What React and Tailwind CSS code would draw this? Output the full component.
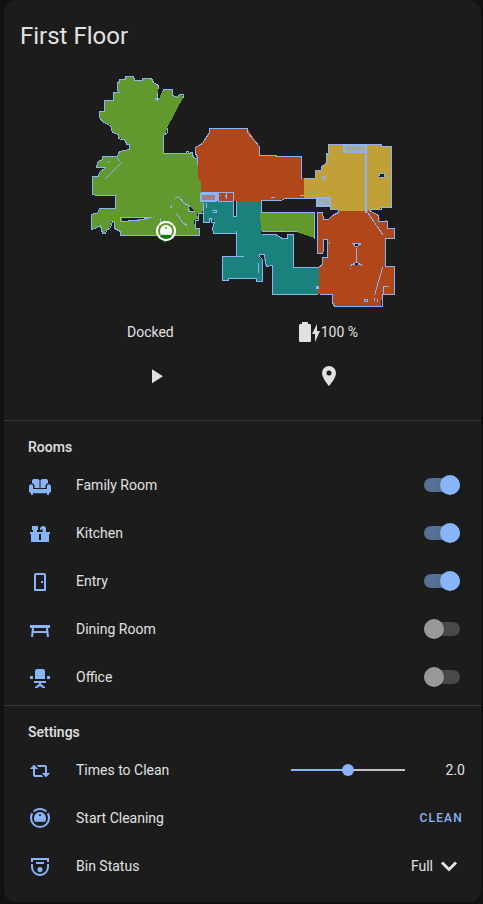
import { useState } from "react";

const ROBOT =
  "M12,2C14.65,2 17.19,3.06 19.07,4.93L17.65,6.35C16.15,4.85 14.12,4 12,4C9.88,4 7.84,4.84 6.35,6.35L4.93,4.93C6.81,3.06 9.35,2 12,2M3.66,6.5L5.11,7.94C4.39,9.17 4,10.57 4,12A8,8 0 0,0 12,20A8,8 0 0,0 20,12C20,10.57 19.61,9.17 18.88,7.94L20.34,6.5C21.42,8.12 22,10.04 22,12A10,10 0 0,1 12,22A10,10 0 0,1 2,12C2,10.04 2.58,8.12 3.66,6.5M12,6A6,6 0 0,1 18,12C18,13.59 17.6,15.2 16.9,16.2L15.8,15.2L14.6,16.2L13.3,15.4L12,16.2L10.7,15.4L9.4,16.2L8.2,15.2L7.1,16.2C6.4,15.2 6,13.59 6,12A6,6 0 0,1 12,6M12,8A1,1 0 0,0 11,9A1,1 0 0,0 12,10A1,1 0 0,0 13,9A1,1 0 0,0 12,8Z";

const ICONS = {
  sofa: "M6,6H9.6Q11,6 11,7.4V15H6.5V13Q6.5,10.4 4,10.2V8Q4,6 6,6ZM14.4,6H18Q20,6 20,8V10.2Q17.5,10.4 17.5,13V15H13V7.4Q13,6 14.4,6ZM3.2,11.2Q5.2,11.2 5.2,13.4V16H18.8V13.4Q18.8,11.2 20.8,11.2T23,13.4V18Q23,20 21,20.2V22H19V20.2H5V22H3V20.2Q1,20 1,18V13.4Q1,11.2 3.2,11.2Z",
  counter:
    "M4,5H10V9H9V11H14.5V8H13.5V9H12V7.5Q12.3,5 15,5Q18,5 18,8V11H22V13H21V21H3V13H2V11H5V9H4ZM11,13V19H13V13Z",
  door: "M8,4H16Q18,4 18,6V22H6V6Q6,4 8,4ZM8,6V20H16V6ZM13,12H15V14H13Z",
  table: "M2,8H22V11H20L21,20H19L18.4,16H5.6L5,20H3L4,11H2ZM6,11L5.8,14H18.2L18,11Z",
  chair:
    "M9,4H15Q17,4 17,6V14H7V6Q7,4 9,4ZM2,11H5V14H2ZM19,11H22V14H19ZM6,16H18V18H13V19L17,22V23H15L12,21.2L9,23H7V22L11,19V18H6Z",
  repeat:
    "M6,6.75L10.25,11H7V17H13.5L15.5,19H7A2,2 0 0,1 5,17V11H1.75L6,6.75M18,19.25L13.75,15H17V9H10.5L8.5,7H17A2,2 0 0,1 19,9V15H22.25L18,19.25Z",
  robot: ROBOT,
  bin: "M3,4H21V8H19V6H5V8H3ZM3,10H5V13A7,7 0 0,0 19,13V10H21V13A9,9 0 0,1 3,13ZM8,8H16V10H8ZM12,13A2.6,2.6 0 1,1 11.99,13Z",
  play: "M8,5.14V19.14L19,12.14L8,5.14Z",
  marker:
    "M12,11.5A2.5,2.5 0 0,1 9.5,9A2.5,2.5 0 0,1 12,6.5A2.5,2.5 0 0,1 14.5,9A2.5,2.5 0 0,1 12,11.5M12,2A7,7 0 0,0 5,9C5,14.25 12,22 12,22C12,22 19,14.25 19,9A7,7 0 0,0 12,2Z",
  battery:
    "M23,11H20V4L15,14H18V22M12.67,4H11V2H5V4H3.33A1.33,1.33 0 0,0 2,5.33V20.67C2,21.4 2.6,22 3.33,22H12.67C13.4,22 14,21.4 14,20.67V5.33A1.33,1.33 0 0,0 12.67,4Z",
};

function Icon({ name, className = "text-[#8ab4f8]" }) {
  return (
    <svg viewBox="0 0 24 24" className={`size-6 shrink-0 ${className}`} fill="currentColor" fillRule="evenodd" aria-hidden="true">
      {name === "sofa" && <path d="M11,7H13V15H11Z" opacity="0.5" />}
      <path d={ICONS[name]} />
    </svg>
  );
}

function FloorMap() {
  return (
    <svg viewBox="83 68 319 244" className="mx-auto mt-2 block w-[319px]" shapeRendering="crispEdges" role="img" aria-label="Floor map">
      {/* room fills */}
      <path fill="#62992e" d="M118,82L119,80L123,79L125,77H133L134,80H142V79H151L153,82L156,84L158,86V101L162,92L163,90H172L173,96H177L180,95L184,96L167,128L166,133L163,135V153H193L194,157L198,160V177L201,182V192L204,206L202,213H197L198,219L194,220L195,228H200V235H121L120,231L114,228V221H112L110,227L106,230L105,233H102L100,226L97,228L92,229V214L98,212L99,208H115V195H97L93,194V177L98,176L99,172L105,168H96L97,162L102,159V156H117L119,151L129,149V144H126L125,140L119,138L118,134L112,133L111,125L103,122L99,117V112H104V101H113L114,93H118Z" />
      <path fill="#b0471b" d="M209,128H247L259,146V155H277V156H301V178H304V198H285L280,200H261V203H233V201H201V182L198,177V165L197,157L195,153V147L202,143L209,132Z" />
      <path fill="#1a817d" d="M203,202H261V234H275L282,238H287L288,234H293V267H319V285L317,294H272V265L265,266L264,255H259L260,259H262V281H257L256,278H229V280H222V256H237L236,233H213L212,228L214,221L203,222Z" />
      <path fill="#62992e" d="M260,212H314V238L308,236L302,234L296,232V231H261Z" />
      <path fill="#c2a038" d="M328,144H381V146H391V207H381L380,209L370,210L365,212H339L338,209H331V206H316V198H304V178H315V170H321L322,166L326,163V153H328Z" />
      <path fill="#b0471b" d="M317,212H322L323,219H328L332,215L339,213V211H366L370,210L375,214L380,218L379,222L387,220V228H394V238H385V266H394V294H382L381,307L334,306L332,302V294H317L319,285V268L318,267L322,264L323,257H328V239H324L323,253H317Z" />
      {/* gaps in the plan */}
      <path fill="#1c1c1c" d="M122,218H146V219H137V220H128V221H122ZM234,201H236V216H234ZM189,207H191L194,211H190ZM379,174H384V177H379ZM325,241H327V248H325Z" />
      {/* walls */}
      <g fill="none" stroke="#8ab4f8" strokeWidth="1" transform="translate(.5 .5)">
        <path d="M157,92V100M158,88V85L156,84L153,82L151,78H142V80H134L133,76H125V79H119V82H117V90L119,92H113V100H104V111H99V117L103,122L110,125L112,132L118,134V138L125,140L126,144H129V149L119,151L117,156H102V159L97,162L96,167H105L99,172L98,176H92V194L97,195H115V208H99L98,212L91,214V229L97,227L100,225L102,233H105L106,230L110,227L112,221H114V228L120,231V235H199V228H195V220H198V213H202M162,92L163,89H172V95L177,97L179,94H183V97M167,127V132L163,135V153H186V151H188V153L192,152V156L197,159V164" />
        <path d="M104,179L121,162M117,158L120,161M108,160V162M120,217H151L137,220H128V221H120ZM160,217V223M175,198L178,196L184,203L190,206M194,211H188V206M176,213L180,219L183,223L187,225M171,204V207H169" />
        <path d="M206,202V207M203,202V222H209V218H211V222H214L212,228L213,233H236V230M236,233V256H243M236,256H222V280H228V278H256V281H262V259L259,256V254H264L266,266L272,265V294H317M258,262V272M211,210H216V212H212" />
        <path d="M197,164V157L195,153V147L202,143L209,132V128H247V132L259,146V155H276V156H301V178M204,201L201,193M261,212V200H280L285,198H304M270,197H274M299,195H303M309,195H312M200,192H233V201H217M236,200V216H233V202" />
        <path d="M261,212H314V238M261,231H296M261,234H275L282,238H287V234H293V267H318L322,264V257H327V239H323V251M281,229V230" />
        <path d="M304,178H315V170H321V166L326,163V153H328V144H381V146H391V207H381V209H370M303,198H316M330,206V209H338V212L332,215L328,219H323L322,212H317V253H322V251M322,176H324V179H322ZM378,175H379V173H384V177H378M387,177H388M376,147H377" />
        <path d="M367,212L383,235M369,210L378,215V221H387V228H394V238H385V266H394V294H382V306H334L332,302V294H319M382,267L374,295M383,294V286H388M352,243L356,246L361,243M356,247V260M350,265L356,262L362,265M364,299H367V301H364ZM374,297V300M377,298V301M350,267V268M329,241V243" />
      </g>
      <path stroke="#8ab4f8" strokeWidth="2" d="M366,144V213" />
      <g stroke="#8ab4f8" strokeWidth="2">
        <path fill="#a37d87" d="M201,194H216V201H201Z" />
        <path fill="#a5a89d" d="M344,145H366V152H344ZM317,198H330V206H317Z" />
      </g>
      <path fill="#8ab4f8" d="M217,193H219V201H217ZM220,195H221V196H220ZM225,195H227V197H225ZM226,193H227V199H226ZM155,98H159V100H155ZM320,203L322,200L324,204H319ZM316,286H319V289H316ZM352,243H361L358,247H355ZM353,265L356,261L360,265Z" />
      <path fill="#1c1c1c" d="M355,244H358V246H355ZM355,263H358V265H355Z" />
      {/* dock and robot */}
      <path fill="#0a7d08" d="M160,233H172L168,240L165,244L163,240Z" />
      <g shapeRendering="auto" transform="translate(154 219)">
        <path fill="#0a7d08" d="M7,12H17V18H7Z" />
        <path fill="#ffffff" fillRule="evenodd" d={ROBOT} />
        <circle cx="12" cy="12" r="9.2" fill="none" stroke="#fff" strokeWidth="1.4" />
      </g>
    </svg>
  );
}

function Section({ title, children }) {
  return (
    <section className="border-t border-[#383838] px-4 pt-4">
      <h2 className="px-2 text-sm leading-5 font-medium">{title}</h2>
      <div className="my-2 flex flex-col gap-2">{children}</div>
    </section>
  );
}

function Row({ icon, label, id, children }) {
  return (
    <div className="flex h-10 items-center pl-2">
      <Icon name={icon} />
      <label htmlFor={id} className="ml-6 flex-1">{label}</label>
      {children}
    </div>
  );
}

function Room({ icon, label, on = false }) {
  const [checked, setChecked] = useState(on);
  const id = label.replace(" ", "-").toLowerCase();
  return (
    <Row icon={icon} label={label} id={id}>
      <input
        id={id}
        type="checkbox"
        role="switch"
        checked={checked}
        onChange={() => setChecked(!checked)}
        className="mr-[5px] flex h-3.5 w-9 appearance-none items-center rounded-full bg-[#494949] before:size-5 before:shrink-0 before:rounded-full before:bg-[#999999] before:shadow-md checked:justify-end checked:bg-[#586f96] checked:before:bg-[#8ab4f8]"
      />
    </Row>
  );
}

export default function App() {
  const [times, setTimes] = useState(2);
  const fill = `${(times - 1) * 50}%`;
  return (
    <div className="min-h-screen bg-[#111111] pr-0.5 pl-1 font-[Roboto,sans-serif] text-sm text-[#e1e1e1]">
      <main className="rounded-xl bg-[#1c1c1c] pt-3 pb-2">
        <h1 className="px-4 text-2xl leading-[48px]">First Floor</h1>
        <FloorMap />
        <div className="mt-2 flex h-6 items-center justify-evenly">
          <span>Docked</span>
          <span className="flex items-center">
            <Icon name="battery" className="text-[#e1e1e1]" />
            100 %
          </span>
        </div>
        <div className="mt-3 mb-6 flex justify-evenly">
          <button type="button" aria-label="Start" className="flex size-10 items-center justify-center">
            <Icon name="play" className="text-[#e1e1e1]" />
          </button>
          <button type="button" aria-label="Locate" className="flex size-10 items-center justify-center">
            <Icon name="marker" className="text-[#e1e1e1]" />
          </button>
        </div>

        <Section title="Rooms">
          <Room icon="sofa" label="Family Room" on />
          <Room icon="counter" label="Kitchen" on />
          <Room icon="door" label="Entry" on />
          <Room icon="table" label="Dining Room" />
          <Room icon="chair" label="Office" />
        </Section>

        <Section title="Settings">
          <Row icon="repeat" label="Times to Clean" id="times">
            <input
              id="times"
              type="range"
              min="1"
              max="3"
              value={times}
              onChange={(e) => setTimes(Number(e.target.value))}
              style={{ backgroundImage: `linear-gradient(to right, #8ab4f8 ${fill}, #c4c0c4 ${fill})` }}
              className="h-0.5 w-[114px] appearance-none [&::-webkit-slider-thumb]:size-3 [&::-webkit-slider-thumb]:appearance-none [&::-webkit-slider-thumb]:rounded-full [&::-webkit-slider-thumb]:bg-[#8ab4f8]"
            />
            <output htmlFor="times" className="w-[60px] text-right">{times.toFixed(1)}</output>
          </Row>
          <Row icon="robot" label="Start Cleaning" id="clean">
            <button id="clean" type="button" className="mr-0.5 text-xs font-medium tracking-widest text-[#8ab4f8]">
              CLEAN
            </button>
          </Row>
          <Row icon="bin" label="Bin Status" id="bin">
            <div className="mr-1 flex items-center">
              <select id="bin" defaultValue="Full" className="-mr-6 appearance-none bg-transparent pr-7 [field-sizing:content]">
                <option>Full</option>
                <option>Empty</option>
              </select>
              <svg viewBox="0 0 24 24" className="pointer-events-none size-6" fill="none" stroke="currentColor" strokeWidth="3" aria-hidden="true">
                <path d="M5 8.5L12 15.5L19 8.5" />
              </svg>
            </div>
          </Row>
        </Section>
      </main>
    </div>
  );
}
